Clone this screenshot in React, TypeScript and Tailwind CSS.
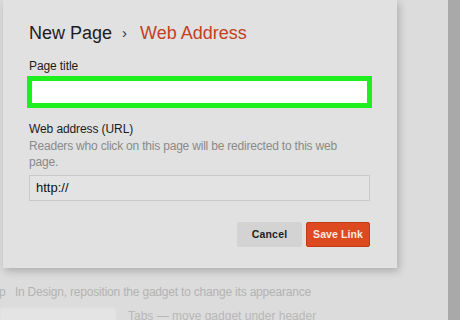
import React from "react";

export default function App() {
  const font = { fontFamily: '"Liberation Sans", Arial, sans-serif' };
  return (
    <div
      className="w-[460px] h-[320px] overflow-hidden flex bg-[#dcdcdc]"
      style={font}
    >
      <div className="flex-1 flex flex-col">
        <div className="shrink-0 ml-[3px] w-[394px] h-[268px] bg-[#e1e1e1] shadow-[2px_3px_8px_rgba(0,0,0,0.22)] flex flex-col pl-[24px] pt-[21px] relative z-10">
          <div className="text-[18px] leading-[24px] h-[24px] flex items-center whitespace-nowrap pl-[2px]">
            <span className="text-[#1c1c1c]">New Page</span>
            <span className="text-[#333] ml-[10px] mr-[13px] text-[15px]">›</span>
            <span className="text-[#c4401f]">Web Address</span>
          </div>
          <div className="mt-[13px] text-[12px] tracking-[-0.1px] leading-[16px] text-[#1c1c1c] pl-[2px]">
            Page title
          </div>
          <div className="mt-[2px] w-[345px] h-[32px] border-[5px] border-[#1df01d] bg-white" />
          <div className="mt-[13px] text-[12px] tracking-[-0.1px] leading-[16px] text-[#1c1c1c] pl-[2px]">
            Web address (URL)
          </div>
          <div className="mt-[1px] text-[12px] tracking-[-0.2px] leading-[16px] text-[#8a8a8a] pl-[2px] w-[330px]">
            Readers who click on this page will be redirected to this web page.
          </div>
          <div className="mt-[5px] ml-[2px] w-[341px] h-[26px] border border-[#c9c9c9] bg-[#e3e3e3] flex items-center pl-[6px] text-[13px] text-[#111]">
            http://
          </div>
          <div className="mt-[21px] ml-[210px] flex gap-[4px]">
            <div className="w-[65px] h-[25px] bg-[#d3d3d3] rounded-[2px] flex items-center justify-center text-[10.5px] font-bold text-[#1e1e1e] tracking-[0.2px]">
              Cancel
            </div>
            <div className="w-[64px] h-[25px] bg-[#dd4a20] border border-[#c23a14] rounded-[2px] flex items-center justify-center text-[10.5px] font-bold text-[#fbe9e2] tracking-[0.1px]">
              Save Link
            </div>
          </div>
        </div>
        <div className="shrink-0 mt-[16px] ml-[-1px] text-[12px] tracking-[-0.2px] leading-[16px] text-[#b3b3b3] whitespace-nowrap">
          p&nbsp;&nbsp;&nbsp;In Design, reposition the gadget to change its appearance
        </div>
        <div className="shrink-0 mt-[8px] flex items-start whitespace-nowrap">
          <div className="w-[116px] h-[14px] bg-[#e4e4e4] rounded-[3px] blur-[1px]" />
          <div className="ml-[12px] text-[12px] leading-[16px] text-[#b8b8b8]">
            Tabs — move gadget under header
          </div>
        </div>
      </div>
      <div className="w-[12px] h-full bg-[#a9a9a9]" />
    </div>
  );
}
